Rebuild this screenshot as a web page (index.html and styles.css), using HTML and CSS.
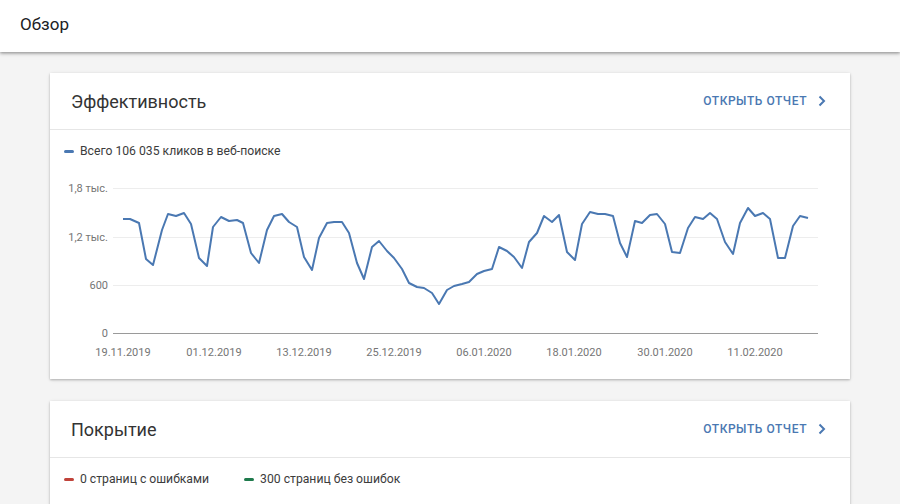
FILE: index.html
```html
<!DOCTYPE html>
<html lang="ru">
<head>
<meta charset="utf-8">
<title>Обзор</title>
<link rel="stylesheet" href="styles.css">
</head>
<body>
<header class="topbar"><h1 class="topbar-title">Обзор</h1></header>
<main class="content">
  <section class="card">
    <div class="card-head">
      <h2 class="card-title">Эффективность</h2>
      <a class="card-link" href="#">ОТКРЫТЬ ОТЧЕТ
        <svg class="chev" width="8" height="12" viewBox="0 0 8 12"><path d="M1.5 1.5 L6 6 L1.5 10.5" fill="none" stroke="currentColor" stroke-width="2"/></svg>
      </a>
    </div>
    <div class="legend">
      <span class="legend-item"><i class="dash dash-blue"></i>Всего 106 035 кликов в веб-поиске</span>
    </div>
    <svg class="chart" width="800" height="209" viewBox="50 170 800 209">
      <g class="grid">
        <line x1="113" y1="188.5" x2="818" y2="188.5"/>
        <line x1="113" y1="237.5" x2="818" y2="237.5"/>
        <line x1="113" y1="285.5" x2="818" y2="285.5"/>
      </g>
      <line class="axis" x1="113" y1="333.5" x2="818" y2="333.5"/>
      <g class="ylab">
        <text x="108" y="192">1,8 тыс.</text>
        <text x="108" y="241">1,2 тыс.</text>
        <text x="108" y="289">600</text>
        <text x="108" y="337">0</text>
      </g>
      <g class="xlab">
        <text x="123" y="356">19.11.2019</text>
        <text x="214" y="356">01.12.2019</text>
        <text x="304" y="356">13.12.2019</text>
        <text x="394" y="356">25.12.2019</text>
        <text x="484" y="356">06.01.2020</text>
        <text x="574" y="356">18.01.2020</text>
        <text x="665" y="356">30.01.2020</text>
        <text x="755" y="356">11.02.2020</text>
      </g>
      <polyline class="series" points="123,219 130,219 139,223 146,259 153,265 162,230 168,214 176,216 184,213 191,224 199,258 207,266 213,227 221,217 229,221 237,220 243,223 251,253 259,263 267,230 274,216 282,214 289,222 297,227 304,257 312,270 319,238 327,223 334,222 342,222 349,233 357,263 364,279 372,247 379,241 387,251 394,258 402,269 409,283 417,287 424,288 432,293 439,304 447,290 454,286 462,284 469,282 477,274 484,271 492,269 499,247 507,251 514,257 522,268 529,242 537,233 544,216 552,222 559,215 567,252 575,260 582,224 590,212 598,214 605,214 613,216 620,243 627,257 635,221 642,223 650,215 657,214 665,224 672,252 680,253 688,228 695,217 703,219 710,213 717,219 725,242 733,254 740,223 748,208 755,216 763,213 770,219 778,258 785,258 793,226 800,216 808,218"/>
    </svg>
  </section>
  <section class="card">
    <div class="card-head">
      <h2 class="card-title">Покрытие</h2>
      <a class="card-link" href="#">ОТКРЫТЬ ОТЧЕТ
        <svg class="chev" width="8" height="12" viewBox="0 0 8 12"><path d="M1.5 1.5 L6 6 L1.5 10.5" fill="none" stroke="currentColor" stroke-width="2"/></svg>
      </a>
    </div>
    <div class="legend">
      <span class="legend-item"><i class="dash dash-red"></i>0 страниц с ошибками</span>
      <span class="legend-item"><i class="dash dash-green"></i>300 страниц без ошибок</span>
    </div>
    <div class="chart-space"></div>
  </section>
</main>
</body>
</html>
```

FILE: styles.css
```css
* { box-sizing: border-box; }
html, body { margin: 0; padding: 0; }
body {
  background: #f4f4f4;
  font-family: Roboto, "Noto Sans", "Liberation Sans", sans-serif;
  color: #212121;
  overflow: hidden;
  height: 504px;
}
.topbar {
  height: 52px;
  background: #fff;
  box-shadow: 0 1px 3px rgba(0,0,0,0.35), 0 2px 4px rgba(0,0,0,0.12);
  display: flex;
  align-items: flex-start;
  padding: 13px 0 0 20px;
  position: relative;
  z-index: 2;
}
.topbar-title {
  margin: 0;
  font-size: 17px;
  font-weight: 400;
  line-height: 22px;
  color: #202124;
}
.content {
  padding: 21px 50px 0;
  display: flex;
  flex-direction: column;
  gap: 22px;
}
.card {
  width: 800px;
  background: #fff;
  box-shadow: 0 1px 2px rgba(0,0,0,0.22), 0 1px 4px rgba(0,0,0,0.1);
}
.card-head {
  height: 57px;
  border-bottom: 1px solid #e6e6e6;
  display: flex;
  align-items: center;
  justify-content: space-between;
  padding: 0 24px 0 21px;
}
.card-title {
  margin: 0;
  font-size: 18px;
  font-weight: 400;
  color: #333;
}
.card-link {
  display: flex;
  align-items: center;
  gap: 11px;
  color: #4a78b2;
  text-decoration: none;
  font-size: 12px;
  font-weight: 500;
  letter-spacing: 0.55px;
}
.chev { display: block; }
.legend {
  height: 40px;
  display: flex;
  align-items: center;
  gap: 35px;
  padding-left: 14px;
  padding-top: 2px;
}
.legend-item {
  display: flex;
  align-items: center;
  font-size: 12.2px;
  color: #3c3c3c;
}
.dash {
  display: inline-block;
  width: 10px;
  height: 3px;
  border-radius: 1.5px;
  margin-right: 6px;
}
.dash-blue { background: #4a78b2; }
.dash-red { background: #c0433a; }
.dash-green { background: #1e7a4c; }
.chart { display: block; }
.chart-space { height: 8px; }
.grid line { stroke: #ededed; stroke-width: 1; }
.axis { stroke: #9a9a9a; stroke-width: 1; }
.ylab text {
  font-family: Roboto, "Liberation Sans", sans-serif;
  font-size: 11px;
  fill: #757575;
  text-anchor: end;
}
.xlab text {
  font-family: Roboto, "Liberation Sans", sans-serif;
  font-size: 11px;
  fill: #757575;
  text-anchor: middle;
}
.series {
  fill: none;
  stroke: #4a78b2;
  stroke-width: 2;
  stroke-linejoin: round;
}
```
